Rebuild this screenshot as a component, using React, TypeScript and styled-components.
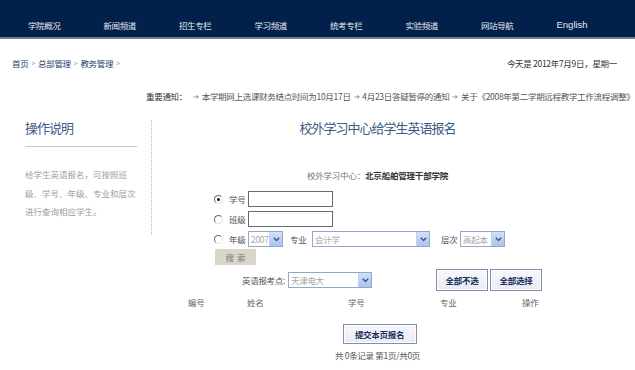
import React from 'react'
import styled, { createGlobalStyle } from 'styled-components'

const GlobalStyle = createGlobalStyle`
  html, body {
    margin: 0;
    padding: 0;
    background: #fff;
  }
  body {
    font-family: 'Noto Sans CJK SC', 'Noto Sans', sans-serif;
    font-size: 9px;
    color: #555;
  }
  * {
    box-sizing: border-box;
  }
`

const Page = styled.div`
  width: 635px;
  height: 370px;
  overflow: hidden;
`

const Nav = styled.nav`
  display: flex;
  align-items: center;
  height: 39px;
  padding: 12px 0 0 28px;
  background: #02204a;
  border-bottom: 2px solid #6f7b92;
`

const NavItem = styled.a<{ $latin?: boolean }>`
  width: 75.5px;
  flex: none;
  color: #e4e9f1;
  font-size: ${(p) => (p.$latin ? '9.5px' : '8.5px')};
  font-family: ${(p) =>
    p.$latin ? "'Liberation Sans', sans-serif" : "'Noto Sans CJK SC', sans-serif"};
  letter-spacing: ${(p) => (p.$latin ? '0' : '-0.4px')};
  text-decoration: none;
  white-space: nowrap;
`

const TopBar = styled.div`
  display: flex;
  align-items: center;
  justify-content: space-between;
  height: 47px;
  padding: 0 18px 0 12px;
`

const Crumbs = styled.div`
  display: flex;
  align-items: center;
  gap: 3px;
  font-size: 8.5px;
  letter-spacing: -0.3px;
`

const Crumb = styled.a`
  color: #1d3c6b;
  text-decoration: none;
`

const Sep = styled.span`
  color: #999;
  font-size: 7px;
`

const Today = styled.div`
  color: #333;
  font-size: 8.5px;
  letter-spacing: -0.3px;
`

const Notice = styled.div`
  display: flex;
  align-items: center;
  height: 20px;
  padding-left: 146px;
  white-space: nowrap;
  overflow: hidden;
  font-size: 8.5px;
  letter-spacing: -0.3px;
  color: #555;
`

const NoticeLabel = styled.span`
  color: #333;
  margin-right: 3px;
`

const Arrow = styled.span`
  color: #6a98d4;
  font-size: 7px;
  margin: 0 3px 0 3px;
`

const Main = styled.div`
  display: flex;
  align-items: flex-start;
  margin-top: 14px;
`

const Side = styled.aside`
  width: 152px;
  flex: none;
  padding: 0 14px 14px 25px;
  border-right: 1px dotted #b5b5b5;
`

const Heading = styled.h2`
  margin: 0;
  font-weight: normal;
  font-size: 13px;
  line-height: 16px;
  letter-spacing: -1px;
  color: #3b5b85;
`

const SideHeading = styled(Heading)`
  padding-bottom: 10px;
  border-bottom: 1px solid #c8c8c8;
`

const SideText = styled.p`
  margin: 18px 0 0;
  font-size: 8.5px;
  line-height: 18.5px;
  color: #a0a0a0;
`

const Content = styled.section`
  flex: 1;
  display: flex;
  flex-direction: column;
  padding-right: 32px;
`

const Title = styled(Heading)`
  text-align: center;
`

const Center = styled.div`
  margin-top: 32px;
  text-align: center;
  font-size: 8.5px;
  line-height: 14px;
  color: #777;
  letter-spacing: -0.2px;

  b {
    color: #333;
  }
`

const Form = styled.div`
  margin: 7px 0 0 62px;
`

const Row = styled.div`
  display: flex;
  align-items: center;
  height: 20px;
`

const Radio = styled.span<{ $checked?: boolean }>`
  position: relative;
  width: 9px;
  height: 9px;
  margin-right: 6px;
  border-radius: 50%;
  border: 1px solid;
  border-color: #6d6d6d #e2e2e2 #e2e2e2 #6d6d6d;
  background: #fff;

  &::after {
    content: '';
    display: ${(p) => (p.$checked ? 'block' : 'none')};
    position: absolute;
    left: 2px;
    top: 2px;
    width: 3px;
    height: 3px;
    border-radius: 50%;
    background: #111;
  }
`

const Label = styled.span<{ $w?: number }>`
  width: ${(p) => (p.$w ? `${p.$w}px` : 'auto')};
  flex: none;
  font-size: 8.5px;
  color: #555;
  letter-spacing: -0.3px;
  white-space: nowrap;
`

const TextBox = styled.div`
  width: 85px;
  height: 16px;
  border: 1px solid #6a6a6a;
  background: #fff;
`

const SelectBox = styled.div<{ $w: number }>`
  display: flex;
  align-items: center;
  justify-content: space-between;
  width: ${(p) => p.$w}px;
  height: 16px;
  padding-left: 2px;
  border: 1px solid #8fa8cc;
  background: #fff;
  color: #a6a6a6;
  font-size: 8.5px;
  letter-spacing: -0.3px;
  white-space: nowrap;
`

const SelectArrow = styled.span`
  display: flex;
  align-items: center;
  justify-content: center;
  width: 13px;
  height: 14px;
  background: linear-gradient(#d3e0f7, #abc3ee);
  border-left: 1px solid #c2d2ee;

  svg {
    display: block;
  }
`

const Gap = styled.span<{ $w: number }>`
  width: ${(p) => p.$w}px;
  flex: none;
`

const SearchButton = styled.button`
  display: block;
  width: 41px;
  height: 16px;
  margin-left: 1px;
  padding: 0;
  border: none;
  background: #d9d5c9;
  color: #7a7a7a;
  font-family: inherit;
  font-size: 8.5px;
  letter-spacing: 3px;
  text-indent: 3px;
`

const PointRow = styled.div`
  display: flex;
  align-items: center;
  height: 22px;
  margin: 4px 0 0 90px;
`

const Buttons = styled.div`
  display: flex;
  gap: 2px;
  margin-left: 64px;
`

const ActionButton = styled.button<{ $w: number; $h: number }>`
  width: ${(p) => p.$w}px;
  height: ${(p) => p.$h}px;
  padding: 0;
  border: 1px solid #8090aa;
  box-shadow: inset 0 0 0 1px #fff;
  background: linear-gradient(#f7f8fb, #e8ebf2);
  color: #1c2d5c;
  font-family: inherit;
  font-size: 8.5px;
  font-weight: bold;
  letter-spacing: -0.3px;
`

const HeaderRow = styled.div`
  display: grid;
  grid-template-columns: 59px 101px 92px 82px auto;
  align-items: center;
  height: 14px;
  margin-top: 4px;
  padding-left: 36px;
  font-size: 8.5px;
  color: #666;
  letter-spacing: -0.3px;
`

const Submit = styled(ActionButton)`
  align-self: center;
  margin: 15px 0 0 4px;
`

const Pager = styled.div`
  margin-top: 5px;
  text-align: center;
  font-size: 8.5px;
  line-height: 12px;
  color: #555;
  letter-spacing: -0.3px;
`

const Chevron = () => (
  <svg width="7" height="5" viewBox="0 0 7 5">
    <path d="M0.8 0.8 L3.5 3.6 L6.2 0.8" fill="none" stroke="#3d5488" strokeWidth="1.4" />
  </svg>
)

const Select = ({ width, value }: { width: number; value: string }) => (
  <SelectBox $w={width}>
    <span>{value}</span>
    <SelectArrow>
      <Chevron />
    </SelectArrow>
  </SelectBox>
)

const navItems = ['学院概况', '新闻频道', '招生专栏', '学习频道', '统考专栏', '实验频道', '网站导航']

const notices = [
  '本学期网上选课财务结点时间为10月17日',
  '4月23日答疑暂停的通知',
  '关于《2008年第二学期远程教学工作流程调整》',
]

export default function App() {
  return (
    <Page>
      <GlobalStyle />
      <Nav>
        {navItems.map((item) => (
          <NavItem key={item}>{item}</NavItem>
        ))}
        <NavItem $latin>English</NavItem>
      </Nav>

      <TopBar>
        <Crumbs>
          <Crumb>首页</Crumb>
          <Sep>&gt;</Sep>
          <Crumb>总部管理</Crumb>
          <Sep>&gt;</Sep>
          <Crumb>教务管理</Crumb>
          <Sep>&gt;</Sep>
        </Crumbs>
        <Today>今天是 2012年7月9日，星期一</Today>
      </TopBar>

      <Notice>
        <NoticeLabel>重要通知：</NoticeLabel>
        {notices.map((n) => (
          <React.Fragment key={n}>
            <Arrow>➔</Arrow>
            {n}
          </React.Fragment>
        ))}
      </Notice>

      <Main>
        <Side>
          <SideHeading>操作说明</SideHeading>
          <SideText>给学生英语报名，可按照班级、学号、年级、专业和层次进行查询相应学生。</SideText>
        </Side>

        <Content>
          <Title>校外学习中心给学生英语报名</Title>
          <Center>
            校外学习中心：<b>北京船舶管理干部学院</b>
          </Center>

          <Form>
            <Row>
              <Radio $checked />
              <Label $w={19}>学号</Label>
              <TextBox />
            </Row>
            <Row>
              <Radio />
              <Label $w={19}>班级</Label>
              <TextBox />
            </Row>
            <Row>
              <Radio />
              <Label $w={19}>年级</Label>
              <Select width={35} value="2007" />
              <Gap $w={7} />
              <Label $w={22}>专业</Label>
              <Select width={118} value="会计学" />
              <Gap $w={11} />
              <Label $w={19}>层次</Label>
              <Select width={45} value="高起本" />
            </Row>
            <SearchButton>搜索</SearchButton>
          </Form>

          <PointRow>
            <Label $w={46}>英语报考点:</Label>
            <Select width={84} value="天津电大" />
            <Buttons>
              <ActionButton $w={52} $h={22}>全部不选</ActionButton>
              <ActionButton $w={52} $h={22}>全部选择</ActionButton>
            </Buttons>
          </PointRow>

          <HeaderRow>
            <span>编号</span>
            <span>姓名</span>
            <span>学号</span>
            <span>专业</span>
            <span>操作</span>
          </HeaderRow>

          <Submit $w={74} $h={20}>提交本页报名</Submit>
          <Pager>共 0条记录 第1页/共0页</Pager>
        </Content>
      </Main>
    </Page>
  )
}
